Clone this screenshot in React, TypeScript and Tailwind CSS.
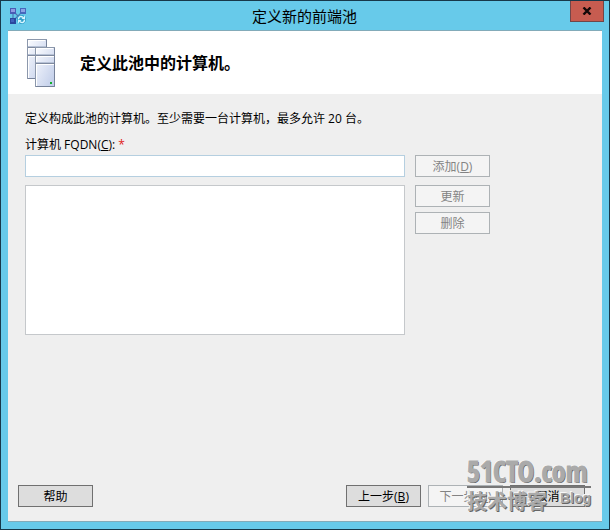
import type { ButtonHTMLAttributes, ReactNode } from 'react';

interface DialogButtonProps extends ButtonHTMLAttributes<HTMLButtonElement> {
  children: ReactNode;
}

function DialogButton({ children, ...props }: DialogButtonProps) {
  return (
    <button
      type="button"
      className="flex h-[22px] w-[75px] shrink-0 items-center justify-center border border-[#707070] bg-[#dddddd] pt-[2px] text-black disabled:border-[#adb2b5] disabled:bg-[#f4f4f4] disabled:text-[#838383]"
      {...props}
    >
      <span className="whitespace-nowrap">{children}</span>
    </button>
  );
}

function TopologyIcon() {
  return (
    <svg className="h-[18px] w-[18px]" viewBox="0 0 18 18" aria-hidden="true">
      <path d="M4 4L9 9L14 4M4 4V13M9 9L4 14" stroke="#4a78b4" strokeWidth="1.2" fill="none" />
      <rect x="1" y="1" width="6" height="6" fill="#4a5cb4" />
      <rect x="2" y="2" width="4" height="3" fill="#8f9be2" />
      <rect x="11" y="1" width="6" height="6" fill="#4668bc" />
      <rect x="12" y="2" width="4" height="3" fill="#8aa4e6" />
      <rect x="1" y="11" width="6" height="6" fill="#2a489e" />
      <rect x="2" y="12" width="3" height="3" fill="#3f62bc" />
      <circle cx="12.500" cy="12.500" r="4.500" fill="#2f9fca" />
      <path d="M9.500 12.500C9.500 9.500 12 8.500 14 10.500M15.500 12.500C15.500 15.500 13 16.500 11 14.500" stroke="#d9f6ff" strokeWidth="1.500" fill="none" />
      <path d="M12.500 12H16V8.500ZM12.500 13H9V16.500Z" fill="#d9f6ff" />
    </svg>
  );
}

function Tower() {
  return (
    <>
      <rect x="0.5" y="0.5" width="19" height="39" fill="url(#tower)" stroke="#8c98ac" />
      <path d="M1.500 39V1.500H18" stroke="#ffffff" fill="none" />
      <path d="M19.500 1V39.500H1" stroke="#76829a" fill="none" />
      <path d="M1 8.500H19M1 16.500H19" stroke="#7f8a9f" />
      <path d="M1 9.500H19M1 17.500H19" stroke="#ffffff" />
      <path d="M1 7.500H19M1 15.500H19" stroke="#b7c2d6" />
    </>
  );
}

function ServersIcon() {
  return (
    <svg className="h-12 w-[29px] shrink-0" viewBox="0 0 29 48" aria-hidden="true">
      <defs>
        <linearGradient id="tower" x1="0" y1="0" x2="1" y2="1">
          <stop offset="0" stopColor="#fbfcff" />
          <stop offset="1" stopColor="#becbe8" />
        </linearGradient>
      </defs>
      <Tower />
      <g transform="translate(8 8)">
        <Tower />
        <rect x="15" y="35" width="2" height="2" fill="#12b02e" />
      </g>
    </svg>
  );
}

function Watermark() {
  return (
    <div
      aria-hidden="true"
      className="pointer-events-none absolute right-[11px] bottom-[5px] w-[124px] text-[#aaaaaa] [text-shadow:1px_1px_0_#666,-1px_-1px_0_#f8f8f8]"
    >
      <p className="border-b-2 border-[#777777] font-['Liberation_Sans_Narrow','Open_Sans_Condensed','Liberation_Sans'] text-[28px] leading-[30px] font-bold whitespace-nowrap [-webkit-text-stroke:1px_#aaaaaa]">51CTO.com</p>
      <p className="flex justify-between leading-[28px] font-bold whitespace-nowrap">
        <span className="text-[20px]">技术博客</span>
        <span className="font-['Liberation_Sans'] text-[14px] leading-[20px]">Blog</span>
      </p>
    </div>
  );
}

export default function App() {
  return (
    <div className="flex min-h-screen flex-col border border-[#17384a] bg-[#67caea] px-[7px] pb-[7px] font-['Open_Sans','Noto_Sans_CJK_SC',sans-serif] text-[12px] leading-4 text-black">
      <header className="relative flex h-[29px] shrink-0 items-center pl-px">
        <TopologyIcon />
        <h1 className="flex-1 pr-[20px] text-center text-[15px]">定义新的前端池</h1>
        <button
          type="button"
          aria-label="关闭"
          className="absolute top-0 -right-[2px] flex h-[21px] w-[34px] items-center justify-center border border-t-0 border-[#714649] bg-[#c75c50]"
        >
          <svg className="h-[8px] w-[10px]" viewBox="0 0 10 8" aria-hidden="true">
            <path d="M1.500 0.500L8.500 7.500M8.500 0.500L1.500 7.500" stroke="#140808" strokeWidth="2.400" />
          </svg>
        </button>
      </header>

      <main className="relative flex flex-1 flex-col border-y border-[#83abb9] bg-[#efefef]">
        <div className="flex h-[63px] shrink-0 items-center gap-6 bg-white px-[19px]">
          <ServersIcon />
          <h2 className="text-[16px] font-bold">定义此池中的计算机。</h2>
        </div>

        <form className="px-[17px] pt-[17px]">
          <p>定义构成此池的计算机。至少需要一台计算机，最多允许 20 台。</p>
          <label htmlFor="fqdn" className="mt-[10px] block">
            计算机 FQDN(<u>C</u>): <span className="text-[#e02020]">*</span>
          </label>
          <div className="mt-[2px] flex gap-[10px]">
            <input id="fqdn" type="text" className="h-[22px] max-w-[380px] min-w-0 flex-1 border border-[#b5cfe0] bg-white px-1 outline-none" />
            <DialogButton disabled>添加(<u>D</u>)</DialogButton>
          </div>
          <div className="mt-2 flex gap-[10px]">
            <select size={8} aria-label="计算机" className="h-[150px] max-w-[380px] min-w-0 flex-1 border border-[#c5c8cb] bg-white outline-none" />
            <div className="flex flex-col gap-[5px]">
              <DialogButton disabled>更新</DialogButton>
              <DialogButton disabled>删除</DialogButton>
            </div>
          </div>
        </form>

        <footer className="mt-auto flex gap-[7px] pt-4 pr-[17px] pb-[14px] pl-[10px]">
          <DialogButton>帮助</DialogButton>
          <div className="flex-1" />
          <DialogButton>上一步(<u>B</u>)</DialogButton>
          <DialogButton disabled>下一步(<u>N</u>)</DialogButton>
          <DialogButton>取消</DialogButton>
        </footer>
        <Watermark />
      </main>
    </div>
  );
}
